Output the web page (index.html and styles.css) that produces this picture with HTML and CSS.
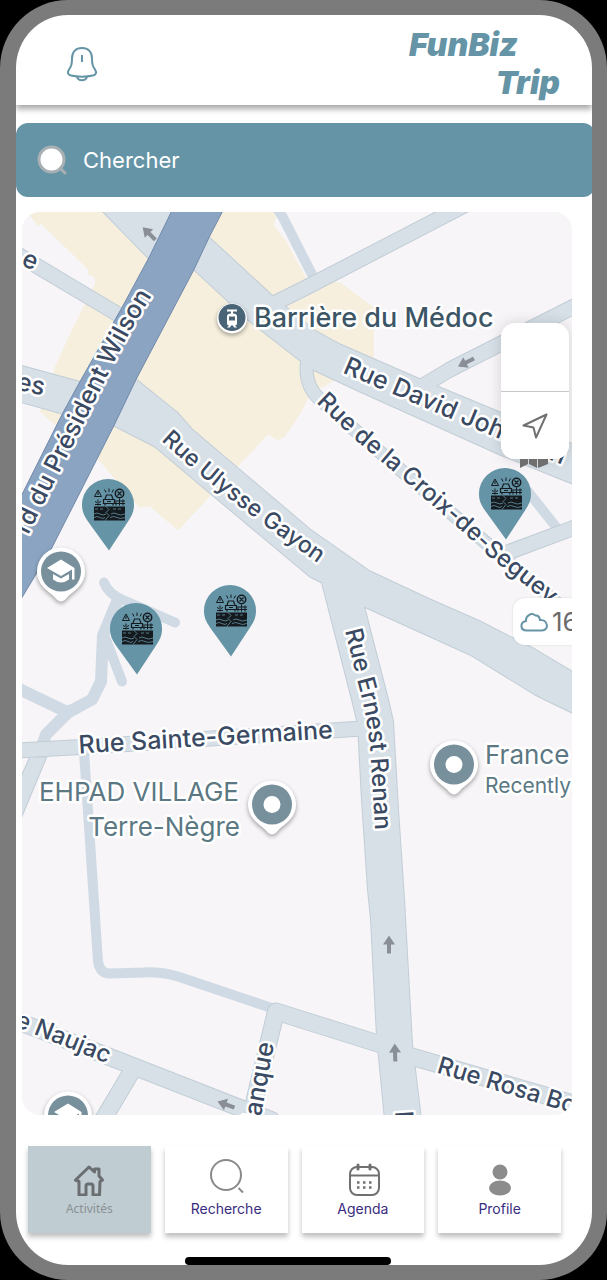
FILE: index.html
```html
<!DOCTYPE html>
<html lang="fr">
<head>
<meta charset="utf-8">
<meta name="viewport" content="width=device-width, initial-scale=1">
<title>FunBiz Trip</title>
<link rel="stylesheet" href="styles.css">
</head>
<body>
<div class="phone">
  <header class="header">
    <button class="bell" type="button" aria-label="Notifications">
      <svg viewBox="0 0 32 36" width="32" height="36" fill="none" stroke="currentColor" stroke-width="2">
        <path d="M16 2C9.500 2 6 6.500 6 12.500C6 19 5 20.500 3 23.500C1 26.500 2 29 5 29.500C12 31 20 31 27 29.500C30 29 31 26.500 29 23.500C27 20.500 26 19 26 12.500C26 6.500 22.500 2 16 2Z"/>
        <path d="M16 9V16M11 31C12.500 35.300 19.500 35.300 21 31"/>
      </svg>
    </button>
    <h1 class="logo"><span>FunBiz</span><span class="logo-second">Trip</span></h1>
  </header>

  <main class="main">
    <label class="search">
      <svg viewBox="0 0 30 30" width="30" height="30">
        <path d="M23 23L28 28" stroke="#a9b0b4" stroke-width="3" stroke-linecap="round"/>
        <circle cx="14.500" cy="14.500" r="12.500" fill="#fff" stroke="#a9b0b4" stroke-width="3"/>
      </svg>
      <input type="text" placeholder="Chercher" aria-label="Chercher">
    </label>

    <section class="map" aria-label="Carte">
      <svg class="map-canvas" viewBox="22 212 550 904" preserveAspectRatio="xMidYMid slice">
        <defs>
          <g id="paths">
            <path class="road w9" d="M274 204L283 218L312 275"/>
            <path class="road w12" d="M16 688L68 713L92 700L101 682L103 636L118 600"/>
            <path class="road w12" d="M70 711L46 735L40 752"/>
            <path class="road w9" d="M104 583Q108 594 122 600L175 623"/>
            <path class="road w9" d="M106 640L122 682"/>
            <path class="road w9" d="M84 752L98 962Q100 975 112 974L143 973Q160 972 178 977L270 1008"/>
            <path class="road w9" d="M528 492L558 530"/>
          </g>
          <g id="streets">
            <path class="road area" d="M103 212L149 259L173 211Z"/>
            <path class="road w14" d="M16 254L120 316"/>
            <path class="road area" d="M209 238L273 297L313 330L340 345L418 379L500 413L580 448V487L500 455L360 392L313 370L299 360L250 322L194 270Z"/>
            <path class="road w14" d="M276 303L310 286L470 203"/>
            <path class="road w14" d="M420 388L450 370L580 304"/>
            <path class="road area" d="M16 365L82 383L62 414L16 401Z"/>
            <path class="road area" d="M136 380L177 413L192 430L310 530L370 572L430 600L480 622L535 650L580 677V717L535 695L470 655L364 607L388 700L393 722L398 810L404 900L412 1045L421 1120H385L377 1037L371 920L368 890L362 800L358 725L352 700L322 583L310 577L200 485L155 447L114 426Z"/>
            <path class="road w12" d="M307 362Q304 386 320 400L400 470L570 615"/>
            <path class="road w14" d="M16 751L90 747L362 729"/>
            <path class="road area" d="M30 758L16 790V830L46 758Z"/>
            <path class="road w16" d="M381 1045L276 1012L250 1120M408 1056L580 1106"/>
            <path class="road w16" d="M16 1021L134 1067L272 1121M134 1068L102 1122"/>
            <path class="road w14" d="M505 554L580 526"/>
          </g>
          <g id="arrow"><path fill="#8a8f97" d="M0-9L6 0H2V9H-2V0H-6Z"/></g>
          <g id="poi">
            <path class="drop" d="M0 30Q-3 30-7 25C-12 20-24 14-24 0A24 24 0 0 1 24 0C24 14 12 20 7 25Q3 30 0 30Z"/>
            <circle r="20" fill="#78909c"/>
          </g>
          <g id="school">
            <use href="#poi"/>
            <path fill="#fff" d="M0-12L-14-3.500L0 4.500L11-2V8H13.500V-3.500ZM-8 2.500V8Q0 14 8 8V2.500L0 7Z"/>
          </g>
          <g id="place"><use href="#poi"/><circle r="8.500" fill="#fff"/></g>
          <g id="marker">
            <path fill="#6494a6" d="M1 45L-20 16C-24 10-26 6-26-1A26 25.500 0 0 1 26-1C26 6 24 10 20 16Z"/>
            <path fill="#151a1f" d="M-14 1H17V15H-14Z"/>
            <path fill="none" stroke="#6494a6" stroke-width="0.800" d="M-2 1L1 4L-2 7L1 10L-3 15M-13 3.500H-10M-8 3.500H-5M5 3.500H8M10 3.500H13M-14 8.500Q-11 6.500-8 8.500T-2 8.500M3 8.500Q6 6.500 9 8.500T17 8.500M-14 12Q-11 10-8 12T-3 12M2 12Q6 10 9 12T17 12"/>
            <path fill="none" stroke="#151a1f" stroke-width="1" d="M-10-15.500L-13.500-9H-6.500ZM-10-13.500V-10.500M-10-6V0M-13-4L-11-3M-7-4L-9-3M-13-1H-7M11.500-7V0M15-6V0M8-4V0M7-4.500H17M7-2H17M-2-13L-3.500-16M1-13.500V-17M4-13L5.500-16"/>
            <circle cx="11.500" cy="-12" r="4.200" fill="none" stroke="#151a1f" stroke-width="1.500"/>
            <path fill="none" stroke="#151a1f" stroke-width="1.200" d="M9.500-14L13.500-10M13.500-14L9.500-10M-3-6.500L-1.500-10.500H3.500L5-6.500M-4.500-6H6.500V-2H-4.500ZM-3-2V0M5-2V0M-1-4H3"/>
          </g>
          <path id="line-wilson" d="M-14 624L36 520L112 367Q130 330 152 296"/>
          <path id="line-ulysse" d="M161 441Q210 486 265 526L345 583"/>
          <path id="line-david" d="M342 373L457 422L620 489"/>
          <path id="line-croix" d="M316 403L355 440L405 482L460 530L490 558L600 645"/>
          <path id="line-renan" d="M345 631L358 684Q369 724 371 762L377 860"/>
          <path id="line-germaine" d="M79 754L345 738"/>
          <path id="line-rosa" d="M436 1073L640 1134"/>
          <path id="line-naujac" d="M-10 1017L107 1064"/>
          <path id="line-blanque" d="M250 1180L274 1044"/>
        </defs>

        <rect x="0" y="190" width="620" height="950" fill="#f7f5f7"/>
        <path fill="#f6efdd" d="M26 210H274L276 218L274 226L285 240L306 278L340 283L374 308V358L310 395L300 415L285 437L278 441L268 435L235 470L178 531L150 507L139 508L100 462L60 430L40 412L52 380L55 367L75 324L95 285L95 278L88 275V270L41 224L38 227Z"/>

        <use href="#paths" class="path-fill"/>
        <use href="#streets" class="casing"/>
        <use href="#streets" class="street-fill"/>
        <path fill="#8ba4c1" stroke="#7189aa" d="M172 211L149 258L122 308L80 382L62 415L16 507V608L52 548L114 426L136 380L194 270L209 238L223 211Z"/>

        <use href="#arrow" transform="translate(149 234) rotate(-45)"/>
        <use href="#arrow" transform="translate(466 363) rotate(-117)"/>
        <use href="#arrow" transform="translate(389 945)"/>
        <use href="#arrow" transform="translate(395 1053) rotate(-2)"/>
        <use href="#arrow" transform="translate(226 1105) rotate(-70)"/>

        <g class="street-names">
          <text><textPath href="#line-wilson" startOffset="100%" text-anchor="end">rd du Président Wilson</textPath></text>
          <text class="compact"><textPath href="#line-ulysse">Rue Ulysse Gayon</textPath></text>
          <text><textPath href="#line-david">Rue David Johnston</textPath></text>
          <text class="medium"><textPath href="#line-croix">Rue de la Croix-de-Seguey</textPath></text>
          <text class="medium"><textPath href="#line-renan">Rue Ernest Renan</textPath></text>
          <text><textPath href="#line-germaine">Rue Sainte-Germaine</textPath></text>
          <text class="medium"><textPath href="#line-rosa">Rue Rosa Bonheur</textPath></text>
          <text class="medium"><textPath href="#line-naujac" startOffset="100%" text-anchor="end">e Naujac</textPath></text>
          <text><textPath href="#line-blanque" startOffset="100%" text-anchor="end">lanque</textPath></text>
          <text transform="translate(34 271) rotate(22)" text-anchor="end">e</text>
          <text transform="translate(43 396) rotate(13)" text-anchor="end">es</text>
          <text transform="translate(395 1112) rotate(86)">R</text>
        </g>

        <circle cx="232" cy="319" r="15" fill="#fff" class="drop"/>
        <circle cx="232" cy="318" r="13.500" fill="#4a6477"/>
        <path fill="#fff" d="M227 310H237V312H233V314Q237 314 237 317V324Q237 326 235 326L237 328H234L233 326H231L230 328H227L229 326Q227 326 227 324V317Q227 314 231 314V312H227ZM229 317V321H235V317Z"/>
        <text class="station" x="254" y="327">Barrière du Médoc</text>

        <g class="place-names">
          <text x="239" y="801" text-anchor="end">EHPAD VILLAGE</text>
          <text x="240" y="836" text-anchor="end">Terre-Nègre</text>
          <text x="485" y="764">France</text>
          <text class="small" x="485" y="793">Recently</text>
        </g>
        <use href="#school" x="61" y="572"/>
        <use href="#school" x="68" y="1116"/>
        <use href="#place" x="272" y="805"/>
        <use href="#place" x="454" y="765"/>

        <a href="#activite-1" aria-label="Activité 1"><use href="#marker" x="108" y="506"/></a>
        <a href="#activite-2" aria-label="Activité 2"><use href="#marker" x="136" y="630"/></a>
        <a href="#activite-3" aria-label="Activité 3"><use href="#marker" x="230" y="612"/></a>
        <a href="#activite-4" aria-label="Activité 4"><use href="#marker" x="505" y="495"/></a>
      </svg>

      <div class="map-tools">
        <button type="button" aria-label="Plan">
          <svg class="fold" viewBox="0 0 28 20" width="28" height="20"><path fill="#6f6f6f" d="M0 0H8V16L0 20ZM9 0H17V20L9 16ZM18 0H28V16L18 20Z"/></svg>
        </button>
        <button type="button" aria-label="Ma position">
          <svg viewBox="0 0 28 28" width="28" height="28" fill="none" stroke="#707070" stroke-width="2" stroke-linejoin="round"><path d="M25.500 2.500L2.500 13.500L12.500 15.500L15 25.500Z"/></svg>
        </button>
      </div>
      <div class="weather">
        <svg viewBox="0 0 28 20" width="28" height="20" fill="none" stroke="#6494a6" stroke-width="2"><path d="M7 18.500C-0.500 18.500 0 10 6 9C5.500 4 11 0 15.500 3.500C17.500 3.300 19.500 5 20 8C28 7 29.500 18.500 22 18.500Z"/></svg>
        <span>16°</span>
      </div>
    </section>
  </main>

  <nav class="tabs" aria-label="Navigation">
    <a class="tab active" href="#activites">
      <svg viewBox="0 0 36 36" width="36" height="36" fill="none" stroke="#6b6e70" stroke-width="3" stroke-linejoin="round" stroke-linecap="round"><path d="M4.500 20L18 7L23.500 12V9H28V16L31.500 20L29 21.500L28.500 35H22V26Q22 24 20 24H17Q15 24 15 26V35H8V21.500Z"/></svg>
      <span>Activités</span>
    </a>
    <a class="tab" href="#recherche">
      <svg class="lens" viewBox="0 0 36 36" width="36" height="36" fill="none" stroke="#8a8a8a" stroke-width="2"><circle cx="18" cy="15" r="15"/><path d="M30.500 28L35 32.500"/></svg>
      <span>Recherche</span>
    </a>
    <a class="tab" href="#agenda">
      <svg viewBox="0 0 36 36" width="36" height="36" fill="none" stroke="#707070" stroke-width="2"><rect x="5" y="7" width="29" height="28" rx="7"/><path d="M5 15.500H34"/><path stroke-width="3" stroke-linecap="round" d="M13 5V9M25 5V9"/><path stroke-width="2.500" stroke-dasharray="2.500 3.500" d="M12 22.500H26.500M12 27.500H26.500"/></svg>
      <span>Agenda</span>
    </a>
    <a class="tab" href="#profile">
      <svg viewBox="0 0 36 36" width="36" height="36" fill="#8c8c8c"><circle cx="18" cy="12" r="7.500"/><ellipse cx="18" cy="28" rx="11" ry="7.500"/></svg>
      <span>Profile</span>
    </a>
  </nav>
  <div class="home-bar"></div>
</div>
</body>
</html>
```

FILE: styles.css
```css
* { box-sizing: border-box; }

body {
  margin: 0;
  background: #000;
  font-family: Inter, Roboto, sans-serif;
}

.phone {
  display: flex;
  flex-direction: column;
  min-height: 100vh;
  overflow: hidden;
  border: 15px solid #7b7b7b;
  border-left-width: 16px;
  border-radius: 68px;
  background: #fff;
}

button {
  padding: 0;
  border: 0;
  background: none;
}

.header {
  display: flex;
  justify-content: space-between;
  align-items: center;
  height: 90px;
  padding: 0 32px 0 50px;
  box-shadow: 0 4px 6px rgba(0, 0, 0, 0.35);
}

.bell {
  height: 36px;
  margin-top: 8px;
  color: #6494a6;
}

.logo {
  display: flex;
  flex-direction: column;
  width: 151px;
  margin: 8px 0 0;
  color: #6494a6;
  font-size: 32px;
  font-style: italic;
  font-weight: 900;
  line-height: 38px;
}

.logo-second { align-self: flex-end; }

.main {
  display: flex;
  flex: 1;
  flex-direction: column;
  gap: 15px;
  padding-top: 18px;
}

.search {
  display: flex;
  align-items: center;
  gap: 16px;
  height: 74px;
  margin-right: -3px;
  padding: 0 21px;
  border-radius: 12px;
  background: #6494a6;
}

.search input {
  flex: 1;
  min-width: 0;
  padding: 0;
  border: 0;
  outline: 0;
  background: none;
  color: #fff;
  font: 22px Inter, sans-serif;
}

.search input::placeholder {
  color: #fff;
  opacity: 1;
}

.map {
  position: relative;
  flex: 1;
  min-height: 400px;
  margin: 0 20px 0 6px;
  overflow: hidden;
  border-radius: 18px;
}

.map-canvas {
  position: absolute;
  width: 100%;
  height: 100%;
}

.road {
  fill: none;
  stroke: currentColor;
  stroke-width: calc(var(--road) + var(--edge));
  stroke-linecap: round;
  stroke-linejoin: round;
}

.area { --road: 0px; fill: currentColor; }
.w9 { --road: 10px; }
.w12 { --road: 12px; }
.w14 { --road: 14px; }
.w16 { --road: 16px; }

.path-fill { --edge: 0px; color: #cfdae4; }
.casing { --edge: 2px; color: #c2cdd6; }
.street-fill { --edge: 0px; color: #d7e0e7; }

.drop {
  fill: #fff;
  filter: drop-shadow(0 2px 2px rgba(0, 0, 0, 0.35));
}

.map text {
  font-size: 25px;
  paint-order: stroke;
  stroke: #fff;
  stroke-width: 5px;
  stroke-linejoin: round;
}

.street-names { fill: #3b4a63; font-weight: 500; }
.place-names { fill: #5b7883; }
.map .medium { font-size: 24px; }
.map .compact { font-size: 23px; }
.map .station { fill: #3d5666; font-size: 27px; font-weight: 500; }
.map .place-names text { font-size: 26px; }
.map .place-names .small { font-size: 21px; }

.map-tools {
  position: absolute;
  top: 111px;
  right: 3px;
  width: 68px;
  border-radius: 14px;
  background: #fff;
  box-shadow: 0 0 14px rgba(0, 0, 0, 0.15);
}

.map-tools button {
  display: grid;
  place-items: center;
  width: 100%;
  height: 68px;
}

.map-tools button + button {
  position: relative;
  border-top: 1px solid #c8c8c8;
  border-radius: 0 0 14px 14px;
  background: #fff;
}

.fold {
  position: absolute;
  bottom: -9px;
  left: 19px;
}

.weather {
  position: absolute;
  top: 386px;
  left: calc(100% - 59px);
  display: flex;
  align-items: center;
  gap: 4px;
  width: 90px;
  height: 47px;
  padding-left: 7px;
  border-radius: 12px;
  background: #fff;
  box-shadow: 0 0 2px rgba(0, 0, 0, 0.15);
  color: #6b6b6b;
  font-size: 26px;
}

.tabs {
  display: grid;
  grid-template-columns: repeat(4, 1fr);
  gap: 14px;
  margin: 31px 31px 24px 12px;
}

.tab {
  display: flex;
  flex-direction: column;
  align-items: center;
  height: 87px;
  padding-top: 14px;
  box-shadow: 0 4px 5px rgba(0, 0, 0, 0.25);
  color: #3a2c80;
  font-size: 14px;
  line-height: 26px;
  text-decoration: none;
}

.lens { overflow: visible; }

.active {
  background: #bfccd2;
  color: #8a9195;
  font-family: "Noto Sans", sans-serif;
  font-size: 12px;
}

.home-bar {
  width: 206px;
  height: 8px;
  margin-left: calc(50% - 119px);
  border-radius: 4px;
  background: #000;
}
```
